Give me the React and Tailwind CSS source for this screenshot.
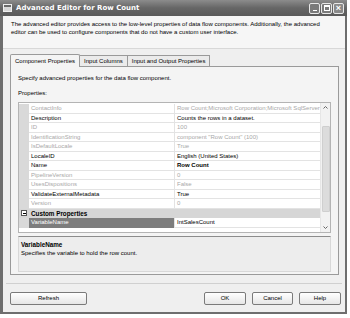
import React from 'react';

const rows = [
  { name: 'ContactInfo', value: 'Row Count;Microsoft Corporation;Microsoft SqlServer v10', dim: true },
  { name: 'Description', value: 'Counts the rows in a dataset.' },
  { name: 'ID', value: '100', dim: true },
  { name: 'IdentificationString', value: 'component "Row Count" (100)', dim: true },
  { name: 'IsDefaultLocale', value: 'True', dim: true },
  { name: 'LocaleID', value: 'English (United States)' },
  { name: 'Name', value: 'Row Count', bold: true },
  { name: 'PipelineVersion', value: '0', dim: true },
  { name: 'UsesDispositions', value: 'False', dim: true },
  { name: 'ValidateExternalMetadata', value: 'True' },
  { name: 'Version', value: '0', dim: true },
];

function TitleButton({ children, close }) {
  return (
    <div
      className={`w-[11px] h-[11px] border border-[#e8e8e8] rounded-[2px] flex items-center justify-center ${
        close ? 'bg-[#8a8a8a]' : 'bg-[#7a7a7a]'
      }`}
    >
      {children}
    </div>
  );
}

function Row({ name, value, dim, bold }) {
  return (
    <div className="flex h-[9.5px] leading-[9.5px]">
      <div className="w-[10px] bg-[#d9d9d9]" />
      <div
        className={`w-[146px] pl-[2px] border-b border-r border-[#e3e3e3] bg-white truncate ${
          dim ? 'text-[#a8a8a8]' : 'text-black'
        }`}
      >
        {name}
      </div>
      <div
        className={`flex-1 pl-[2px] border-b border-[#e3e3e3] bg-white whitespace-nowrap overflow-hidden ${
          dim ? 'text-[#a8a8a8]' : 'text-black'
        } ${bold ? 'font-bold' : ''}`}
      >
        {value}
      </div>
    </div>
  );
}

function Button({ label, className = '' }) {
  return (
    <div
      className={`h-[13px] border border-[#7a7a7a] rounded-[2px] bg-gradient-to-b from-white to-[#e6e6e6] flex items-center justify-center text-[6px] text-black ${className}`}
    >
      {label}
    </div>
  );
}

export default function App() {
  return (
    <div className="w-[350px] h-[318px] bg-white font-['Liberation_Sans',sans-serif]">
      <div className="w-[347px] h-[314px] flex flex-col bg-[#6e6e6e] pb-[2px] pl-[3px] pr-[2px]">
        {/* title bar */}
        <div className="h-[16px] -ml-[3px] -mr-[2px] flex items-center pl-[3px] pr-[3px] bg-gradient-to-b from-[#8c8c8c] via-[#666666] to-[#5a5a5a]">
          <div className="w-[9px] h-[8px] bg-[#d8d8d8] border border-[#efefef] flex flex-col">
            <div className="h-[2px] bg-[#6a6a6a]" />
          </div>
          <span className="ml-[4px] text-[7px] font-bold text-white font-['DejaVu_Sans',sans-serif]">
            Advanced Editor for Row Count
          </span>
          <div className="ml-auto flex gap-[1px]">
            <TitleButton>
              <div className="w-[4px] h-[1.5px] bg-white mt-[5px]" />
            </TitleButton>
            <TitleButton>
              <div className="w-[6px] h-[6px] border border-white border-t-2" />
            </TitleButton>
            <TitleButton close>
              <span className="text-white text-[9px] leading-none font-bold">×</span>
            </TitleButton>
          </div>
        </div>

        {/* body */}
        <div className="flex-1 flex flex-col bg-[#efefef]">
          <div className="h-[33px] bg-[#f6f6f6] border-b border-[#d8d8d8] pt-[4px] pl-[8px] text-[6px] leading-[8px] text-black">
            <div>
              The advanced editor provides access to the low-level properties of data flow components. Additionally, the advanced
            </div>
            <div>editor can be used to configure components that do not have a custom user interface.</div>
          </div>

          {/* tabs */}
          <div className="flex items-end h-[17px] pl-[7px] text-[6px] text-black">
            <div className="h-[13px] px-[4px] flex items-center bg-[#f4f4f4] border border-b-0 border-[#9a9a9a] rounded-t-[2px] -mb-px z-10 relative">
              Component Properties
            </div>
            <div className="h-[11px] px-[4px] flex items-center bg-[#ebebeb] border border-b-0 border-l-0 border-[#9a9a9a]">
              Input Columns
            </div>
            <div className="h-[11px] px-[4px] flex items-center bg-[#ebebeb] border border-b-0 border-l-0 border-[#9a9a9a]">
              Input and Output Properties
            </div>
          </div>

          {/* tab panel */}
          <div className="h-[209px] ml-[7px] mr-[6px] border border-[#9a9a9a] bg-[#f4f4f4] flex flex-col px-[7px] text-[6px]">
            <div className="mt-[7px] h-[8px] leading-[8px] text-black">
              Specify advanced properties for the data flow component.
            </div>
            <div className="mt-[7px] h-[8px] leading-[8px] text-black">Properties:</div>

            <div className="mt-[5px] h-[131px] border border-[#b4b4b4] bg-white flex">
              <div className="flex-1 flex flex-col overflow-hidden pt-[1px]">
                {rows.map((r) => (
                  <Row key={r.name} {...r} />
                ))}
                <div className="flex h-[9.5px] leading-[9.5px] bg-[#d6d6d6] items-center font-bold text-black text-[6.3px]">
                  <div className="w-[10px] flex justify-center">
                    <div className="w-[6px] h-[6px] border border-[#555] bg-white flex items-center justify-center">
                      <div className="w-[3px] h-px bg-black" />
                    </div>
                  </div>
                  <span className="pl-[2px]">Custom Properties</span>
                </div>
                <div className="flex h-[9.5px] leading-[9.5px]">
                  <div className="w-[10px] bg-[#d9d9d9]" />
                  <div className="w-[146px] pl-[2px] bg-[#7d7d7d] text-white border-r border-[#e3e3e3]">
                    VariableName
                  </div>
                  <div className="flex-1 pl-[2px] border-b border-[#e3e3e3] bg-white text-black">IntSalesCount</div>
                </div>
              </div>
              <div className="w-[10px] bg-[#f2f2f2] border-l border-[#e6e6e6] flex flex-col items-center">
                <div className="h-[9px] w-full flex items-center justify-center">
                  <svg width="5" height="3" viewBox="0 0 5 3">
                    <path d="M0.5 2.5 L2.5 0.5 L4.5 2.5" stroke="#666" strokeWidth="1" fill="none" />
                  </svg>
                </div>
                <div className="mt-[14px] w-[8px] h-[86px] bg-[#dcdcdc] border border-[#cfcfcf] rounded-[1px]" />
                <div className="mt-auto h-[9px] w-full flex items-center justify-center">
                  <svg width="5" height="3" viewBox="0 0 5 3">
                    <path d="M0.5 0.5 L2.5 2.5 L4.5 0.5" stroke="#666" strokeWidth="1" fill="none" />
                  </svg>
                </div>
              </div>
            </div>

            <div className="mt-[3px] h-[36px] border-t border-[#8c8c8c] border-x border-b border-x-[#d8d8d8] border-b-[#d8d8d8] bg-[#ededed] px-[2px] pt-[4px] leading-[8px] text-black">
              <div className="font-bold text-[6.3px]">VariableName</div>
              <div>Specifies the variable to hold the row count.</div>
            </div>
          </div>

          <div className="mt-[8px] mx-[3px] border-t border-[#d0d0d0]" />

          {/* buttons */}
          <div className="mt-[8px] flex pl-[7px] pr-[4px]">
            <Button label="Refresh" className="w-[77px]" />
            <div className="ml-auto flex gap-[6px]">
              <Button label="OK" className="w-[42px]" />
              <Button label="Cancel" className="w-[41px]" />
              <Button label="Help" className="w-[42px]" />
            </div>
          </div>
        </div>
      </div>
    </div>
  );
}
